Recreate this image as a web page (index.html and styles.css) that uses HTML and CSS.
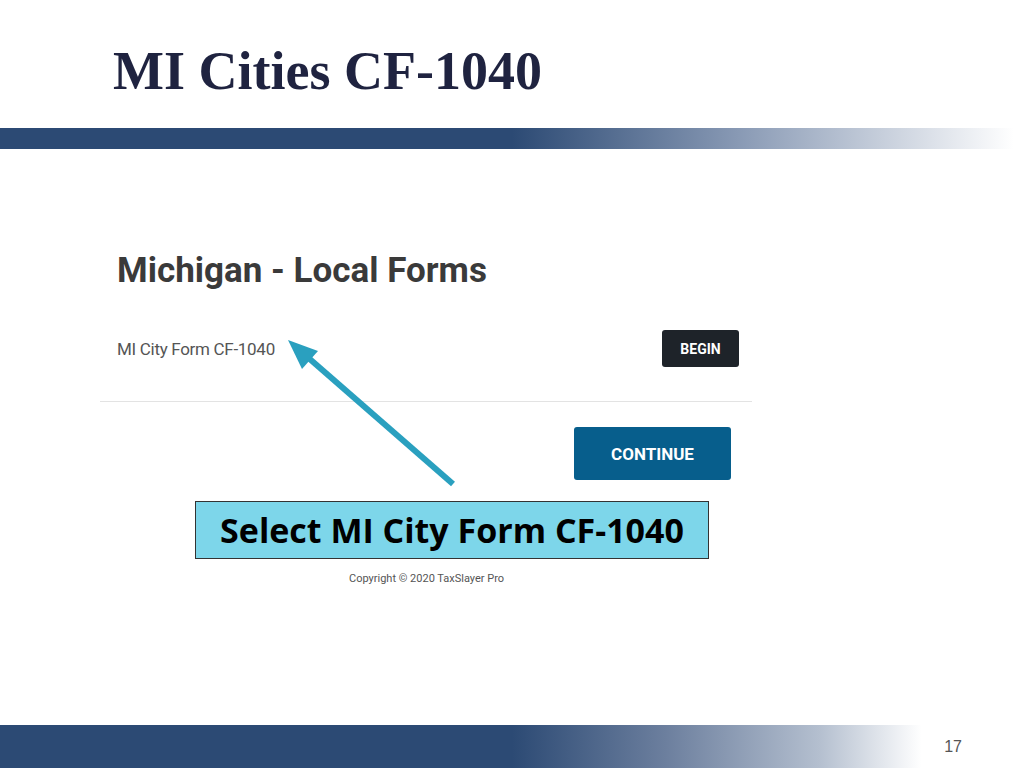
FILE: index.html
```html
<!DOCTYPE html>
<html lang="en">
<head>
  <meta charset="UTF-8">
  <title>MI Cities CF-1040</title>
  <link rel="stylesheet" href="styles.css">
</head>
<body>
  <div class="slide">
    <div class="head">
      <h1 class="title">MI Cities CF-1040</h1>
    </div>
    <div class="bar top-bar"></div>

    <div class="main">
      <div class="shot">
        <h2 class="shot-title">Michigan - Local Forms</h2>
        <div class="form-row">
          <span class="form-name">MI City Form CF-1040</span>
          <a class="btn btn-begin">BEGIN</a>
        </div>
        <div class="shot-foot">
          <a class="btn btn-continue">CONTINUE</a>
        </div>
      </div>
      <div class="callout">Select MI City Form CF-1040</div>
      <p class="copy">Copyright © 2020 TaxSlayer Pro</p>

      <!-- arrow over the screenshot -->
      <svg class="arrow" width="200" height="170" viewBox="0 0 200 170">
        <line x1="173" y1="149" x2="24" y2="19" stroke="#2aa0bf" stroke-width="6"/>
        <polygon points="8,5 38,16 22,34" fill="#2aa0bf"/>
      </svg>
    </div>

    <div class="bar bottom-bar">
      <span class="page-num">17</span>
    </div>
  </div>
</body>
</html>
```

FILE: styles.css
```css
html, body, h1, h2, p {
  margin: 0;
  padding: 0;
}
body {
  background: #fff;
}
.slide {
  width: 1024px;
  height: 768px;
  position: relative;
  overflow: hidden;
  display: flex;
  flex-direction: column;
}
.head {
  height: 128px;
  padding-left: 113px;
  box-sizing: border-box;
}
.title {
  font-family: "Liberation Serif", serif;
  font-weight: bold;
  font-size: 54px;
  line-height: 54px;
  padding-top: 44px;
  color: #1f2340;
}
.bar {
  background: linear-gradient(to right, #2c4a74 0, #2c4a74 50%, #8899b4 72%, #fff 99%);
}
.top-bar {
  height: 21px;
}
.main {
  flex: 1;
  position: relative;
}
.shot {
  width: 652px;
  margin-left: 100px;
  font-family: Roboto, "Liberation Sans", sans-serif;
}
.shot-title {
  font-size: 35px;
  font-weight: bold;
  color: #3a3a3a;
  padding: 101px 0 0 17px;
  line-height: 42px;
}
.form-row {
  display: flex;
  justify-content: space-between;
  align-items: center;
  padding: 0 13px 34px 17px;
  margin-top: 38px;
  border-bottom: 1px solid #e3e3e3;
}
.form-name {
  font-size: 17px;
  color: #555;
  letter-spacing: -0.3px;
}
.btn {
  display: flex;
  align-items: center;
  justify-content: center;
  color: #fff;
  font-weight: bold;
  border-radius: 3px;
}
.btn-begin {
  width: 77px;
  height: 37px;
  background: #1e2329;
  font-size: 14px;
}
.shot-foot {
  display: flex;
  justify-content: flex-end;
  padding: 25px 21px 0 0;
}
.btn-continue {
  width: 157px;
  height: 53px;
  background: #075e8c;
  font-size: 17px;
}
.callout {
  width: 512px;
  height: 56px;
  margin: 21px 0 0 195px;
  background: #7dd6ea;
  border: 1px solid #333;
  font-family: "Open Sans", "Liberation Sans", sans-serif;
  font-weight: bold;
  font-size: 34px;
  line-height: 56px;
  text-align: center;
  color: #000;
}
.copy {
  margin: 13px 0 0 349px;
  font-family: Roboto, "Liberation Sans", sans-serif;
  font-size: 11px;
  color: #555;
}
.arrow {
  position: absolute;
  left: 280px;
  top: 186px;
}
.bottom-bar {
  height: 43px;
  display: flex;
  justify-content: flex-end;
  align-items: center;
  padding-right: 62px;
  background: linear-gradient(to right, #2c4a74 0, #2c4a74 50%, #6c7f9e 65%, #b4bfcf 80%, #fff 90%);
}
.page-num {
  font-family: "Liberation Sans Narrow", "Liberation Sans", sans-serif;
  font-size: 16px;
  color: #555;
}
```
